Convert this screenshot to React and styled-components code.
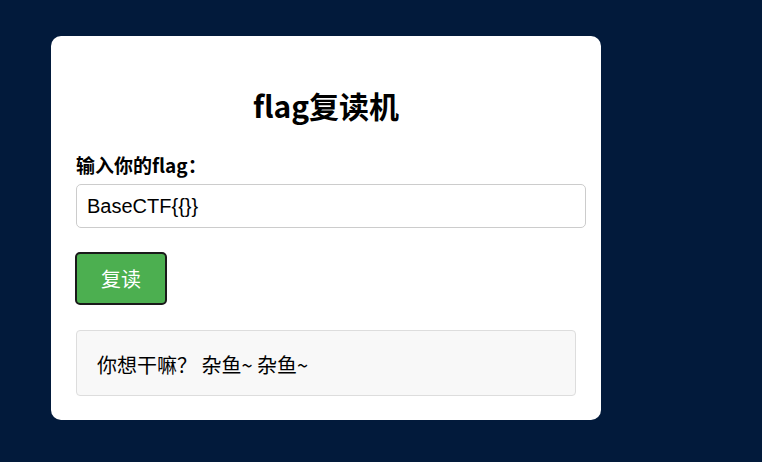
import React from 'react';
import styled, { createGlobalStyle } from 'styled-components';

const GlobalStyle = createGlobalStyle`
  html, body {
    margin: 0;
    padding: 0;
    background: #021a3b;
    font-family: "Liberation Sans", "Noto Sans CJK SC", sans-serif;
  }
  body {
    padding: 36px 0 0 51px;
    height: 462px;
    box-sizing: border-box;
  }
`;

const Card = styled.div`
  width: 500px;
  padding: 25px;
  background: #fff;
  border-radius: 10px;
  box-sizing: content-box;
  height: 334px;
`;

const Title = styled.h1`
  margin: 26px 0 31px;
  text-align: center;
  font-family: "Noto Sans CJK SC", sans-serif;
  font-size: 30px;
  line-height: 36px;
  font-weight: 700;
  color: #000;
`;

const Label = styled.label`
  display: block;
  font-family: "Noto Sans CJK SC", sans-serif;
  font-size: 19px;
  font-weight: 700;
  line-height: 22px;
  margin-bottom: 8px;
  color: #000;
`;

const Input = styled.input`
  display: block;
  height: 44px;
  box-sizing: border-box;
  width: 510px;
  padding: 0 10px;
  font-family: "Liberation Sans", sans-serif;
  font-size: 20px;
  color: #000;
  border: 1px solid #ccc;
  border-radius: 5px;
  outline: none;
`;

const Button = styled.button`
  display: block;
  margin: 24px 0 0 -1px;
  width: 92px;
  height: 53px;
  background: #4caf50;
  color: #fff;
  font-family: "Noto Sans CJK SC", sans-serif;
  font-size: 20px;
  border: 2px solid #1a1a1a;
  border-radius: 5px;
  cursor: pointer;
`;

const Result = styled.div`
  margin-top: 25px;
  height: 66px;
  box-sizing: border-box;
  padding: 3px 20px 0;
  display: flex;
  align-items: center;
  background: #f8f8f8;
  border: 1px solid #ddd;
  border-radius: 4px;
  font-family: "Noto Sans CJK SC", sans-serif;
  font-size: 20px;
  color: #000;
  white-space: pre;
`;

export default function App() {
  return (
    <>
      <GlobalStyle />
      <Card>
        <Title>flag复读机</Title>
        <Label htmlFor="flag">输入你的flag：</Label>
        <Input id="flag" defaultValue="BaseCTF{{}}" />
        <Button>复读</Button>
        <Result>你想干嘛？ 杂鱼~ 杂鱼~</Result>
      </Card>
    </>
  );
}
